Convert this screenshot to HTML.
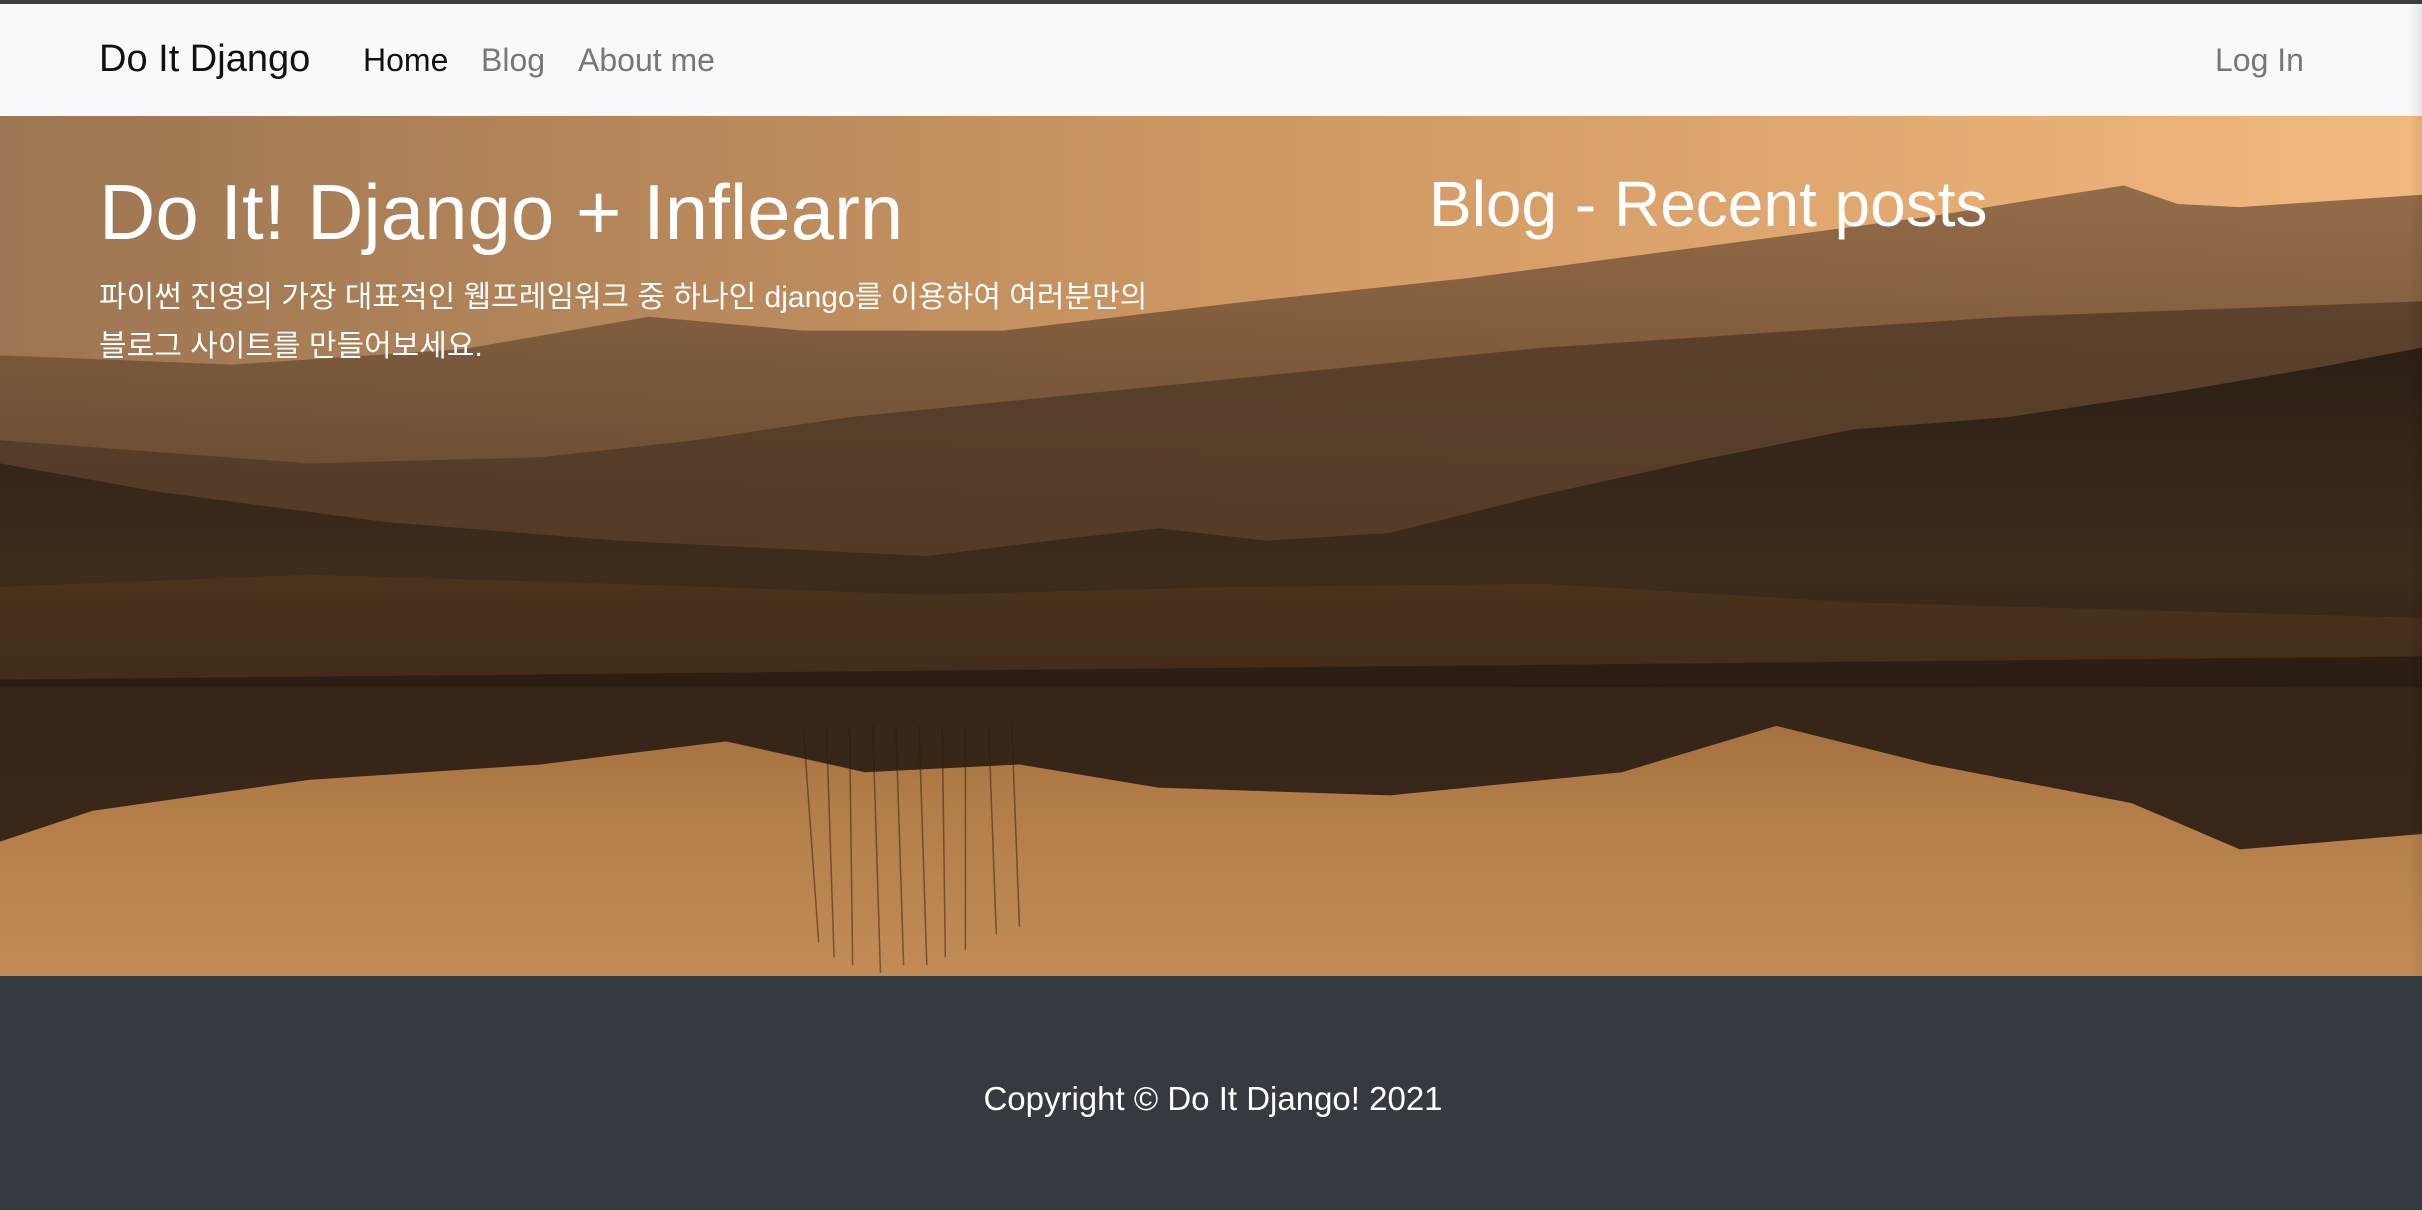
<!DOCTYPE html>
<html><head><meta charset="utf-8"><style>
*{margin:0;padding:0;box-sizing:border-box}
body{width:2422px;height:1210px;overflow:hidden;font-family:"Liberation Sans","Noto Sans CJK KR",sans-serif;background:#343a40;position:relative}
.top{position:absolute;left:0;top:0;width:2422px;height:4px;background:#3a3d42}
.nav{position:absolute;left:0;top:4px;width:2422px;height:112px;background:#f8f9fa}
.t{position:absolute;white-space:nowrap;line-height:1}
.hero{position:absolute;left:0;top:116px;width:2422px;height:860px;overflow:hidden}
.foot{position:absolute;left:0;top:976px;width:2422px;height:234px;background:#343a40}
.sb{position:absolute;right:0;top:4px;width:14px;height:972px;background:linear-gradient(90deg,rgba(0,0,0,0),rgba(0,0,0,.08))}
</style></head><body>
<div class="top"></div>
<div class="nav">
<div class="t" style="left:99px;top:36px;font-size:38px;color:#111">Do It Django</div>
<div class="t" style="left:363px;top:40px;font-size:32px;color:#111">Home</div>
<div class="t" style="left:481px;top:40px;font-size:32px;color:#777">Blog</div>
<div class="t" style="left:578px;top:40px;font-size:32px;color:#777">About me</div>
<div class="t" style="left:2215px;top:40px;font-size:32px;color:#777">Log In</div>
</div>
<div class="hero">
<svg width="2422" height="860" viewBox="0 75 1568 557" preserveAspectRatio="none" style="position:absolute;left:0;top:0">
<defs>
<linearGradient id="sky" x1="0" x2="1" y1="0" y2="0"><stop offset="0" stop-color="#9c7552"/><stop offset=".55" stop-color="#d29a64"/><stop offset="1" stop-color="#f2b97f"/></linearGradient>
<linearGradient id="far" x1="0" x2="0" y1="0" y2="1"><stop offset="0" stop-color="#8a6443"/><stop offset=".5" stop-color="#5a3f29"/><stop offset="1" stop-color="#3e2b1c"/></linearGradient>
<linearGradient id="water" x1="0" x2="0" y1="0" y2="1"><stop offset="0" stop-color="#9c6c3c"/><stop offset=".4" stop-color="#b27d48"/><stop offset="1" stop-color="#c38c57"/></linearGradient>
<linearGradient id="land" x1="0" x2="0" y1="0" y2="1"><stop offset="0" stop-color="#2b1f16"/><stop offset=".6" stop-color="#3e2c1c"/><stop offset="1" stop-color="#241910"/></linearGradient>
</defs>
<rect x="0" y="75" width="1568" height="557" fill="url(#sky)"/>
<polygon fill="url(#far)" opacity=".9" points="0,230 150,236 300,226 420,205 520,214 650,214 800,196 950,180 1100,160 1250,140 1330,127 1375,120 1410,132 1450,134 1568,126 1568,632 0,632"/>
<polygon fill="#4e3725" opacity=".75" points="0,285 200,300 350,296 450,285 550,270 700,255 850,240 1000,225 1150,215 1300,205 1568,195 1568,632 0,632"/>
<polygon fill="url(#land)" points="0,300 100,318 250,338 400,350 520,356 600,360 680,350 750,342 820,350 900,345 1000,320 1100,298 1200,278 1300,270 1400,255 1500,238 1568,225 1568,470 0,470"/>
<polygon fill="#55391f" opacity=".55" points="0,380 200,372 400,378 600,385 800,380 1000,378 1200,390 1568,400 1568,440 0,450"/>
<rect x="0" y="445" width="1568" height="187" fill="url(#water)"/>
<polygon fill="#2a1d14" opacity=".9" points="0,440 1568,425 1568,540 1450,550 1380,520 1250,495 1150,470 1050,500 900,515 750,510 660,495 560,500 470,480 350,495 200,505 60,525 0,545"/>
<g stroke="#2a1d14" stroke-width="1" opacity=".5">
<line x1="520" y1="470" x2="530" y2="610"/><line x1="535" y1="470" x2="540" y2="620"/><line x1="550" y1="470" x2="552" y2="625"/><line x1="565" y1="470" x2="570" y2="630"/><line x1="580" y1="470" x2="585" y2="625"/><line x1="595" y1="470" x2="600" y2="625"/><line x1="610" y1="470" x2="612" y2="620"/><line x1="625" y1="470" x2="625" y2="615"/><line x1="640" y1="470" x2="645" y2="605"/><line x1="655" y1="470" x2="660" y2="600"/>
</g>
</svg>
<div class="t" style="left:99px;top:57px;font-size:78px;color:#fff">Do It! Django + Inflearn</div>
<div class="t" style="left:1429px;top:56px;font-size:64px;color:#fff">Blog - Recent posts</div>
<div style="position:absolute;left:99px;top:157px;font-size:30px;line-height:49px;color:#fff;white-space:nowrap">파이썬 진영의 가장 대표적인 웹프레임워크 중 하나인 django를 이용하여 여러분만의<br>블로그 사이트를 만들어보세요.</div>
</div>
<div class="foot">
<div class="t" style="left:0;width:2422px;text-align:center;top:106px;font-size:33px;color:#fff;padding-left:4px">Copyright © Do It Django! 2021</div>
</div>
<div class="sb"></div>
</body></html>
